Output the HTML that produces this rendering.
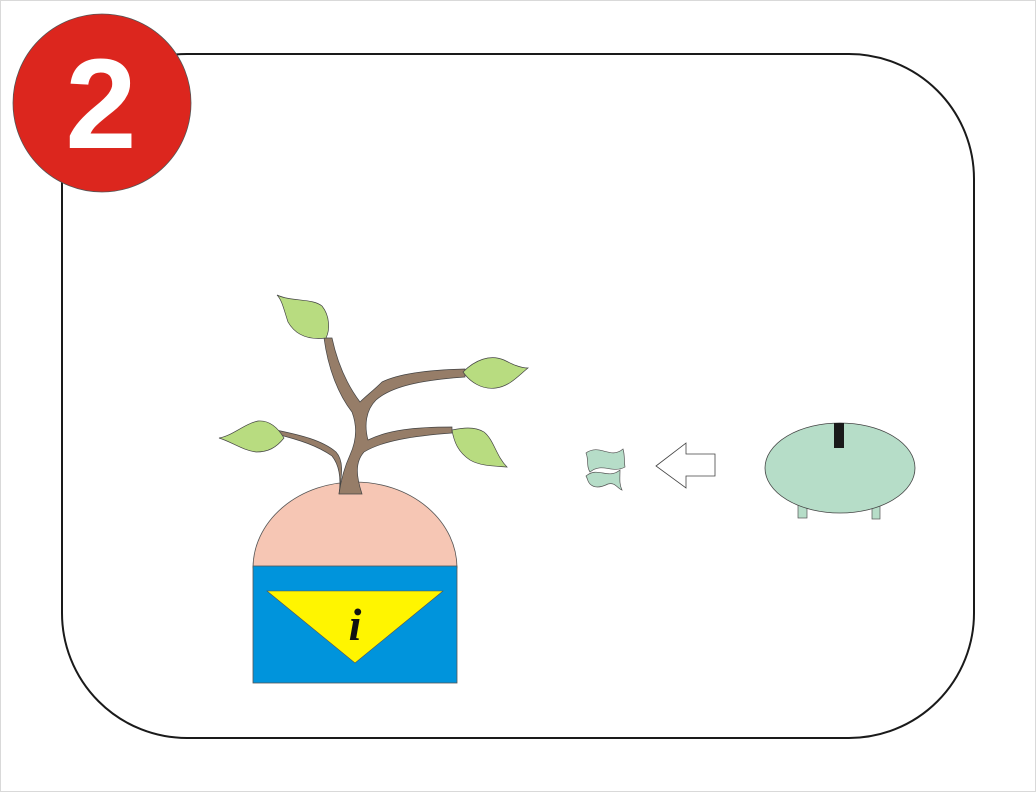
<!DOCTYPE html>
<html><head><style>html,body{margin:0;padding:0;background:#fff}</style></head><body>
<svg width="1036" height="792" viewBox="0 0 1036 792" xmlns="http://www.w3.org/2000/svg">
<rect x="0.5" y="0.5" width="1035" height="791" fill="#fff" stroke="#d9d9d9"/>
<rect x="62" y="54" width="912" height="684" rx="125" ry="125" fill="none" stroke="#1a1a1a" stroke-width="2"/>
<circle cx="102" cy="103" r="89" fill="#dc261e" stroke="#555" stroke-width="0.8"/>
<text x="101" y="148" text-anchor="middle" font-family="Liberation Sans, sans-serif" font-weight="bold" font-size="128" fill="#fff">2</text>
<path d="M253,568 A102,86 0 0 1 457,568 Z" fill="#f6c6b4" stroke="#555" stroke-width="0.8"/>
<rect x="253" y="566" width="204" height="117" fill="#0094dc" stroke="#555" stroke-width="0.8"/>
<polygon points="267,591 443,591 355,663" fill="#fff500" stroke="#555" stroke-width="0.6"/>
<text x="355" y="640" text-anchor="middle" font-family="Liberation Serif, serif" font-style="italic" font-weight="bold" font-size="46" fill="#111">i</text>
<g fill="#967d68" stroke="#444" stroke-width="0.7">
<path d="M339,494 C341,478 345,462 336,452 C322,440 300,435 276,430 L276,434 C300,440 318,446 332,456 C340,466 341,480 339,494 Z"/>
<path d="M339,494 L362,494 C356,476 355,462 364,452 C382,441 412,436 452,433 L452,427 C415,427 388,430 368,440 C364,425 366,410 376,400 C392,386 422,380 465,377 L465,369 C425,370 398,374 382,382 C374,390 366,396 360,402 C348,386 338,366 332,338 L324,338 C328,368 338,394 352,412 C358,428 356,442 350,455 C344,468 341,480 339,494 Z"/>
</g>
<g fill="#b8dc80" stroke="#444" stroke-width="0.7">
<path d="M277,295 C292,302 312,298 322,306 C330,316 330,330 326,338 C310,340 296,336 288,322 C284,310 282,300 277,295 Z"/>
<path d="M463,372 C475,360 490,354 504,360 C512,364 520,368 528,368 C518,376 510,386 496,388 C482,390 470,382 463,372 Z"/>
<path d="M219,438 C232,436 244,424 258,421 C270,420 278,428 284,438 C276,448 268,452 256,452 C242,450 232,442 219,438 Z"/>
<path d="M452,430 C462,428 474,426 484,432 C494,440 496,456 507,467 C494,466 480,466 470,460 C458,452 454,442 452,430 Z"/>
</g>
<g fill="#b6ddc8" stroke="#555" stroke-width="0.7">
<path d="M586,453 C600,443 610,460 623,449 C625,455 624,462 625,467 C612,474 602,462 590,472 C586,466 589,460 586,453 Z"/>
<path d="M586,476 C598,466 608,480 620,470 C620,478 619,484 622,490 C617,488 615,482 608,484 C600,488 594,488 590,484 C587,481 588,479 586,476 Z"/>
</g>
<polygon points="656,466 686,443 686,454 715,454 715,476 686,476 686,488" fill="#fff" stroke="#444" stroke-width="0.8"/>
<rect x="798" y="504" width="9" height="14" fill="#b6ddc8" stroke="#555" stroke-width="0.7"/>
<rect x="872" y="506" width="8" height="13" fill="#b6ddc8" stroke="#555" stroke-width="0.7"/>
<ellipse cx="840" cy="468" rx="75" ry="45" fill="#b6ddc8" stroke="#444" stroke-width="0.8"/>
<rect x="834" y="423" width="10" height="25" fill="#1a1a1a"/>
</svg>
</body></html>
